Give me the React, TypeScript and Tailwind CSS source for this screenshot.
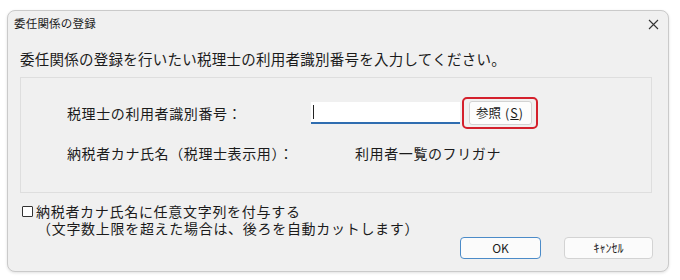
import React from "react";

const jp = { fontFamily: '"Noto Sans CJK JP", "Noto Sans", sans-serif' };

function CloseIcon() {
  return (
    <svg width="11" height="11" viewBox="0 0 11 11" className="text-[#333]">
      <path d="M1 1 L10 10 M10 1 L1 10" stroke="currentColor" strokeWidth="1.1" />
    </svg>
  );
}

function App() {
  return (
    <div className="w-[680px] h-[280px] bg-white pt-[10px] pl-[7px] text-[#1b1b1b]" style={jp}>
      <div className="w-[662px] h-[262px] rounded-[8px] border border-[#cacaca] bg-[#f0f0f0] shadow-[0_1px_3px_rgba(0,0,0,0.12)] flex flex-col">
        {/* title bar */}
        <div className="h-[26px] flex items-center justify-between pl-[6px] pr-[9px]">
          <span className="text-[11.5px] leading-none tracking-[0.2px]">委任関係の登録</span>
          <CloseIcon />
        </div>

        <p className="mt-[12px] ml-[12px] text-[14.5px] leading-[20px] tracking-[0.25px]">
          委任関係の登録を行いたい税理士の利用者識別番号を入力してください。
        </p>

        {/* group box */}
        <div className="mt-[8px] ml-[12px] w-[632px] h-[116px] border border-[#dedede] bg-[#f0f0f0] flex flex-col pt-[19px] pl-[46px]">
          <div className="flex items-center h-[32px]">
            <span className="w-[244px] text-[14px] tracking-[0.6px] leading-[20px]">税理士の利用者識別番号：</span>
            <div className="w-[149px] h-[22px] bg-white border-b-2 border-[#2f6db0] flex items-center pl-[2px]">
              <div className="w-px h-[14px] bg-[#222]" />
            </div>
            <div className="ml-[2px] w-[76px] h-[32px] rounded-[5px] border-2 border-[#d4202c] flex items-center justify-center">
              <div className="w-[63px] h-[24px] rounded-[3px] border border-[#d3d3d3] bg-[#fdfdfd] flex items-center justify-center text-[12.5px] leading-none">
                参照<span className="ml-[4px] tracking-[1px]">(<span className="underline">S</span>)</span>
              </div>
            </div>
          </div>
          <div className="flex items-center h-[20px] mt-[14px] text-[14px] tracking-[0.6px]">
            <span className="w-[288px]">納税者カナ氏名（税理士表示用）：</span>
            <span>利用者一覧のフリガナ</span>
          </div>
        </div>

        {/* checkbox */}
        <div className="mt-[10px] ml-[14px] flex flex-col text-[14px] leading-[17px] tracking-[0.7px]">
          <div className="flex items-center">
            <div className="w-[11px] h-[11px] border border-[#333] rounded-[1px] bg-white mr-[3px]" />
            <span>納税者カナ氏名に任意文字列を付与する</span>
          </div>
          <span className="pl-[15px]">（文字数上限を超えた場合は、後ろを自動カットします）</span>
        </div>

        {/* buttons */}
        <div className="flex justify-end gap-[23px] pr-[15px]">
          <button className="w-[81px] h-[22px] rounded-[4px] border border-[#4b8bc8] bg-[#fbfbfb] text-[12px] leading-none">
            OK
          </button>
          <button className="w-[89px] h-[22px] rounded-[4px] border border-[#d3d3d3] bg-[#fbfbfb] text-[12px] leading-none">
            ｷｬﾝｾﾙ
          </button>
        </div>
      </div>
    </div>
  );
}

export default App;
